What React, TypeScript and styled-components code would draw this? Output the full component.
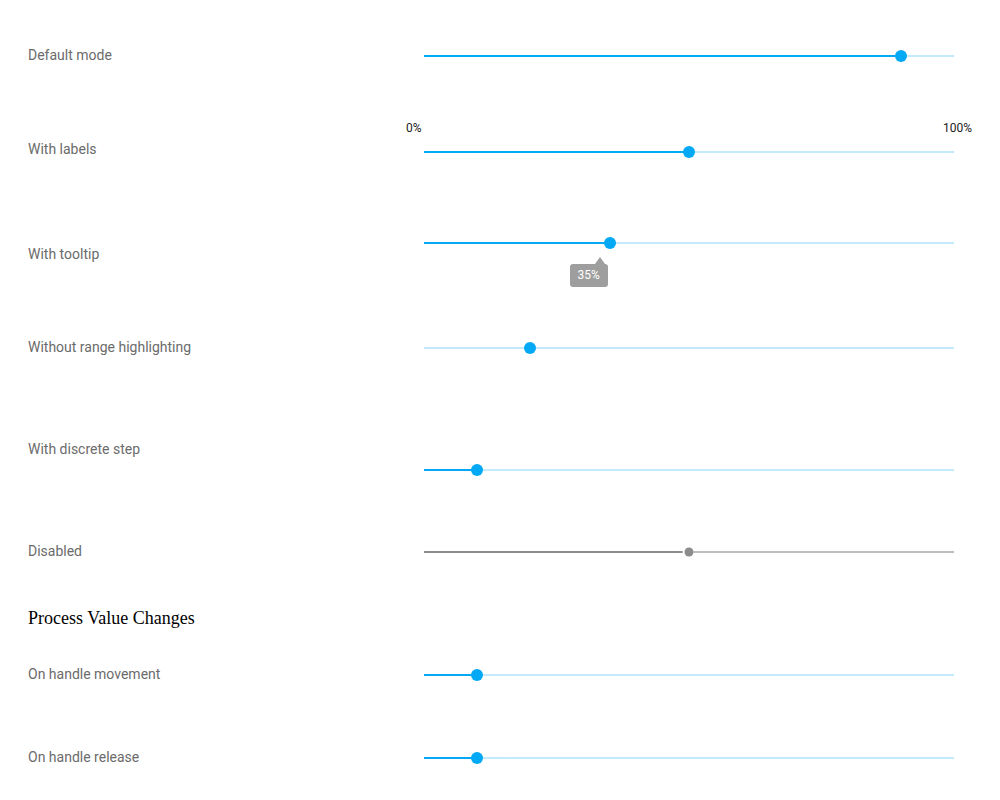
import React from "react";
import styled, { createGlobalStyle, css } from "styled-components";

const Global = createGlobalStyle`
  html, body { margin: 0; padding: 0; background: #fff; }
  body { font-family: Roboto, "Liberation Sans", Arial, sans-serif; }
`;

const BLUE = "#03a9f4";
const LIGHT = "rgba(3,169,244,0.24)";

const Page = styled.div`
  width: 1000px;
  box-sizing: border-box;
  padding: 0 46px 40px 28px;
  display: flex;
  flex-direction: column;
`;

const Row = styled.div<{ $gap: number }>`
  display: flex;
  align-items: center;
  height: 12px;
  margin-top: ${(p) => p.$gap}px;
`;

const Label = styled.div<{ $shift: number }>`
  width: 396px;
  flex: none;
  font-size: 14px;
  line-height: 20px;
  color: #6b6b6b;
  white-space: nowrap;
  ${(p) =>
    p.$shift < 0
      ? css`margin-bottom: ${-p.$shift * 2}px;`
      : css`margin-top: ${p.$shift * 2}px;`}
`;

const Heading = styled.div<{ $gap: number }>`
  margin-top: ${(p) => p.$gap}px;
  font-family: "Liberation Serif", "Times New Roman", serif;
  font-size: 18px;
  line-height: 20px;
  color: #000;
`;

const SliderBox = styled.div`
  flex: 1;
  position: relative;
  height: 12px;
  display: flex;
  align-items: center;
`;

const Track = styled.div<{ $value: number; $highlight: boolean; $disabled: boolean }>`
  width: 100%;
  height: 2px;
  background: ${(p) => {
    const on = p.$disabled ? "#8c8c8c" : BLUE;
    const off = p.$disabled ? "#bdbdbd" : LIGHT;
    if (!p.$highlight) return off;
    return `linear-gradient(to right, ${on} 0, ${on} ${p.$value}%, ${off} ${p.$value}%, ${off} 100%)`;
  }};
`;

const Handle = styled.div<{ $disabled: boolean }>`
  position: absolute;
  top: 50%;
  transform: translate(-50%, -50%);
  border-radius: 50%;
  ${(p) =>
    p.$disabled
      ? css`
          width: 9px;
          height: 9px;
          background: #8c8c8c;
          box-shadow: -1px 0 0 1px #fff;
        `
      : css`
          width: 12px;
          height: 12px;
          background: ${BLUE};
        `}
`;

const ScaleLabels = styled.div`
  position: absolute;
  left: -18px;
  right: -18px;
  bottom: 23px;
  display: flex;
  justify-content: space-between;
  font-size: 12px;
  line-height: 14px;
  color: #212121;
`;

const Tooltip = styled.div`
  position: absolute;
  top: 27px;
  height: 23px;
  line-height: 23px;
  padding: 0 8px;
  box-sizing: border-box;
  width: 38px;
  text-align: center;
  border-radius: 3px;
  background: #9e9e9e;
  color: #fff;
  font-size: 12px;
  &::before {
    content: "";
    position: absolute;
    top: -7px;
    right: 3px;
    border-left: 5px solid transparent;
    border-right: 5px solid transparent;
    border-bottom: 7px solid #9e9e9e;
  }
`;

type SliderProps = {
  value: number;
  highlight?: boolean;
  disabled?: boolean;
  labels?: boolean;
  tooltip?: boolean;
};

function Slider({ value, highlight = true, disabled = false, labels, tooltip }: SliderProps) {
  return (
    <SliderBox>
      {labels && (
        <ScaleLabels>
          <span>0%</span>
          <span>100%</span>
        </ScaleLabels>
      )}
      <Track $value={value} $highlight={highlight} $disabled={disabled} />
      <Handle $disabled={disabled} style={{ left: `${value}%` }} />
      {tooltip && <Tooltip style={{ left: `calc(${value}% - 40px)` }}>{value}%</Tooltip>}
    </SliderBox>
  );
}

export default function App() {
  return (
    <>
      <Global />
      <Page>
        <Row $gap={50}>
          <Label $shift={-1.5}>Default mode</Label>
          <Slider value={90} />
        </Row>
        <Row $gap={84}>
          <Label $shift={-3.5}>With labels</Label>
          <Slider value={50} labels />
        </Row>
        <Row $gap={79}>
          <Label $shift={10.5}>With tooltip</Label>
          <Slider value={35} tooltip />
        </Row>
        <Row $gap={93}>
          <Label $shift={-1.5}>Without range highlighting</Label>
          <Slider value={20} highlight={false} />
        </Row>
        <Row $gap={110}>
          <Label $shift={-21.5}>With discrete step</Label>
          <Slider value={10} />
        </Row>
        <Row $gap={70}>
          <Label $shift={-1.5}>Disabled</Label>
          <Slider value={50} disabled />
        </Row>
        <Heading $gap={50}>Process Value Changes</Heading>
        <Row $gap={41}>
          <Label $shift={-1.5}>On handle movement</Label>
          <Slider value={10} />
        </Row>
        <Row $gap={71}>
          <Label $shift={-1.5}>On handle release</Label>
          <Slider value={10} />
        </Row>
      </Page>
    </>
  );
}
